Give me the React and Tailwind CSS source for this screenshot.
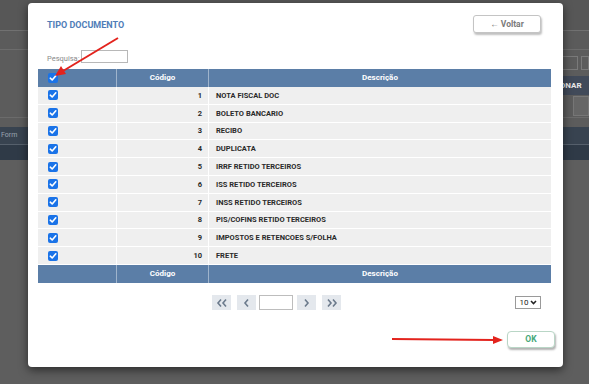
import React from "react";

const rows = [
  [1, "NOTA FISCAL DOC"],
  [2, "BOLETO BANCARIO"],
  [3, "RECIBO"],
  [4, "DUPLICATA"],
  [5, "IRRF RETIDO TERCEIROS"],
  [6, "ISS RETIDO TERCEIROS"],
  [7, "INSS RETIDO TERCEIROS"],
  [8, "PIS/COFINS RETIDO TERCEIROS"],
  [9, "IMPOSTOS E RETENCOES S/FOLHA"],
  [10, "FRETE"],
];

function Check() {
  return (
    <span className="flex h-[10px] w-[10px] items-center justify-center rounded-[2px] bg-[#1a73e8]">
      <svg width="8" height="8" viewBox="0 0 8 8">
        <path d="M1.3 4.2 L3.2 6 L6.8 1.8" stroke="#fff" strokeWidth="1.6" fill="none" strokeLinecap="round" strokeLinejoin="round" />
      </svg>
    </span>
  );
}

function HeaderRow({ withCheck }) {
  return (
    <div className="flex h-[18px] bg-[#5b7ea7] text-[8px] font-bold text-white">
      <div className="flex w-[79px] items-center pl-[10px] border-r border-[#9fb4cc]">
        {withCheck && <Check />}
      </div>
      <div className="flex w-[92px] items-center justify-center border-r border-[#9fb4cc]">Código</div>
      <div className="flex flex-1 items-center justify-center">Descrição</div>
    </div>
  );
}

function Chev({ dir, double }) {
  const one = dir === "l" ? "M5 1.5 L2 5 L5 8.5" : "M2 1.5 L5 5 L2 8.5";
  return (
    <svg width={double ? 12 : 7} height="10" viewBox={double ? "0 0 12 10" : "0 0 7 10"}>
      <path d={one} stroke="#6b7a8c" strokeWidth="1.6" fill="none" />
      {double && <path d={one} transform="translate(5 0)" stroke="#6b7a8c" strokeWidth="1.6" fill="none" />}
    </svg>
  );
}

function PagBtn({ children }) {
  return (
    <div className="flex h-[15px] w-[19px] items-center justify-center bg-[#e4e8ed]">
      {children}
    </div>
  );
}

export default function App() {
  return (
    <div className="relative h-[384px] w-[589px] overflow-hidden bg-[#5e5e5e] font-['Roboto',sans-serif]">
      {/* background page */}
      <div className="flex flex-col">
        <div className="h-[30px] bg-[#575757]" />
        <div className="h-px bg-[#717171]" />
        <div className="h-[18px] bg-[#5b5b5b]" />
        <div className="h-px bg-[#6c6c6c]" />
        <div className="flex h-[26px] items-center justify-end bg-[#5c5c5c]">
          <div className="h-[14px] w-[20px] border border-[#7a7a7a]" />
          <div className="ml-[3px] h-[14px] w-[8px] border border-[#7a7a7a]" />
        </div>
        <div className="flex h-[19px] items-center bg-[#5c5c5c]">
          <div className="ml-[520px] flex h-full w-[80px] items-center bg-[#414a59] pl-[14px] text-[8px] font-bold text-[#e8e8e8]">SELECIONAR</div>
        </div>
        <div className="flex h-[22px] items-center justify-end bg-[#5c5c5c]">
          <div className="h-[20px] w-[16px] border border-[#777] bg-[#666]" />
        </div>
        <div className="h-px bg-[#6b6b6b]" />
        <div className="h-[9px] bg-[#5c5c5c]" />
        <div className="flex h-[17px] items-center bg-[#384350] pl-[1px] text-[7px] text-[#9aa4b0]">Form</div>
        <div className="h-px bg-[#56606c]" />
        <div className="h-[15px] bg-[#2f3a47]" />
      </div>

      {/* modal */}
      <div className="absolute left-[28px] top-[3px] flex h-[364px] w-[535px] flex-col rounded-[4px] bg-white pl-[10px] pr-[12px] shadow-[0_3px_10px_rgba(0,0,0,0.55)]">
        <div className="mt-[12px] flex h-[18px] items-center justify-between pl-[9px] pr-[10px]">
          <span className="pt-[4px] text-[9px] font-bold text-[#4f7db8]">TIPO DOCUMENTO</span>
          <button className="flex h-[18px] w-[68px] items-center justify-center rounded-[3px] border border-[#c4c4c4] bg-white text-[8.5px] font-bold text-[#7a7a7a] shadow-[1px_2px_2px_rgba(0,0,0,0.25)]">
            ← Voltar
          </button>
        </div>
        <div className="mt-[17px] flex h-[13px] items-center pl-[9px]">
          <span className="mt-[5px] text-[7.5px] text-[#8a8a8a]">Pesquisa:</span>
          <div className="ml-[1px] h-[13px] w-[47px] border border-[#b8b8b8] bg-white" />
        </div>
        <div className="mt-[6px] flex flex-col">
          <HeaderRow withCheck />
          {rows.map(([n, d]) => (
            <div key={n} className="flex h-[17.8px] border-b border-white bg-[#efefef] text-[7.5px] font-bold text-[#2a2a2a]">
              <div className="flex w-[79px] items-center pl-[10px] border-r border-white">
                <Check />
              </div>
              <div className="flex w-[92px] items-center justify-end pr-[6px] border-r border-white">{n}</div>
              <div className="flex flex-1 items-center pl-[7px]">{d}</div>
            </div>
          ))}
          <HeaderRow />
        </div>
        <div className="mt-[12px] flex h-[16px] items-center pl-[174px] pr-[10px]">
          <PagBtn><Chev dir="l" double /></PagBtn>
          <div className="ml-[6px]"><PagBtn><Chev dir="l" /></PagBtn></div>
          <div className="ml-[3px] h-[15px] w-[34px] border border-[#bdbdbd] bg-white" />
          <div className="ml-[4px]"><PagBtn><Chev dir="r" /></PagBtn></div>
          <div className="ml-[6px]"><PagBtn><Chev dir="r" double /></PagBtn></div>
          <div className="ml-auto flex h-[13px] w-[26px] items-center justify-center gap-[1px] border border-[#9a9a9a] bg-white text-[8px] text-[#222]">
            10
            <svg width="7" height="5" viewBox="0 0 7 5"><path d="M1 1 L3.5 3.6 L6 1" stroke="#222" strokeWidth="1.5" fill="none" /></svg>
          </div>
        </div>
        <div className="mt-[20px] flex justify-end">
          <button className="-mr-[4px] flex h-[17px] w-[48px] items-center justify-center rounded-[4px] border border-[#b9d6c6] bg-white text-[8.5px] font-bold text-[#45a878] shadow-[1px_2px_2px_rgba(0,0,0,0.3)]">
            OK
          </button>
        </div>
      </div>

      {/* red arrows */}
      <svg className="pointer-events-none absolute left-0 top-0" width="589" height="384">
        <line x1="118" y1="38" x2="63" y2="71" stroke="#e3231d" strokeWidth="2" />
        <polygon points="55,76 61,66 66,74" fill="#e3231d" />
        <line x1="392" y1="339" x2="494" y2="340" stroke="#e3231d" strokeWidth="2" />
        <polygon points="503,340 493,336 493,344" fill="#e3231d" />
      </svg>
    </div>
  );
}
